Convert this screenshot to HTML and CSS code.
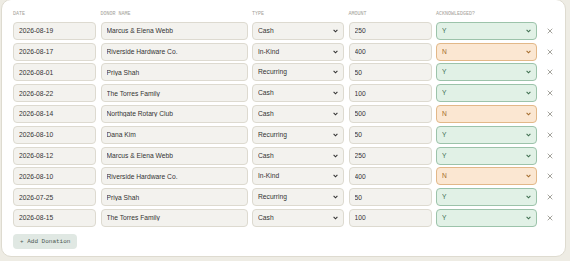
FILE: index.html
```html
<html>
<head>
<title>Donations</title>
<meta charset="utf-8" name="viewport" content="width=device-width, initial-scale=1.0" />
<link rel="stylesheet" href="styles.css">
</head>
<body>

<div class="card">
<div class="grid" id="grid">
<div class="head">Date</div>
<div class="head">Donor Name</div>
<div class="head">Type</div>
<div class="head">Amount</div>
<div class="head">Acknowledged?</div>
<div></div>
</div>
<button class="add">+ Add Donation</button>
</div>

<script>
let rows = [
    ["2026-08-19", "Marcus & Elena Webb", "Cash", "250", "Y"],
    ["2026-08-17", "Riverside Hardware Co.", "In-Kind", "400", "N"],
    ["2026-08-01", "Priya Shah", "Recurring", "50", "Y"],
    ["2026-08-22", "The Torres Family", "Cash", "100", "Y"],
    ["2026-08-14", "Northgate Rotary Club", "Cash", "500", "N"],
    ["2026-08-10", "Dana Kim", "Recurring", "50", "Y"],
    ["2026-08-12", "Marcus & Elena Webb", "Cash", "250", "Y"],
    ["2026-08-10", "Riverside Hardware Co.", "In-Kind", "400", "N"],
    ["2026-07-25", "Priya Shah", "Recurring", "50", "Y"],
    ["2026-08-15", "The Torres Family", "Cash", "100", "Y"]
];

let types = ["Cash", "In-Kind", "Recurring"];

function field(value) {
    let el = document.createElement("input");
    el.className = "field";
    el.value = value;
    return el;
}

function choice(options, value, cls) {
    let el = document.createElement("select");
    el.className = "field pick " + cls;
    for (let o of options) {
        let opt = document.createElement("option");
        opt.textContent = o;
        if (o == value) opt.selected = true;
        el.append(opt);
    }
    return el;
}

let grid = document.getElementById("grid");
for (let r of rows) {
    grid.append(field(r[0]));
    grid.append(field(r[1]));
    grid.append(choice(types, r[2], ""));
    grid.append(field(r[3]));
    grid.append(choice(["Y", "N"], r[4], r[4] == "Y" ? "yes" : "no"));
    let del = document.createElement("span");
    del.className = "del";
    del.title = "Remove";
    del.innerHTML = '<svg width="6" height="6" viewBox="0 0 6 6"><path d="M0.7 0.7 L5.3 5.3 M5.3 0.7 L0.7 5.3" stroke="#9a9891" stroke-width="0.9" fill="none"/></svg>';
    grid.append(del);
}
</script>
</body>
</html>
```

FILE: styles.css
```css
body {
    margin: 0;
    background-color: #eeece4;
    font-family: "Liberation Sans", Arial, sans-serif;
    color: #333;
}

.card {
    background-color: #fff;
    border: 1px solid #dedbd0;
    border-radius: 10px;
    margin: -1px 4px 0 1px;
    height: 258px;
    box-sizing: border-box;
    padding: 10px 12px 0 11px;
}

.grid {
    display: grid;
    grid-template-columns: 83px 147px 92px 83px 101px 20px;
    column-gap: 4.5px;
    row-gap: 2.8px;
    align-items: center;
}

.head {
    font-family: "Liberation Mono", monospace;
    font-size: 5px;
    color: #a3a098;
    text-transform: uppercase;
    height: 9px;
    line-height: 9px;
}

.field {
    height: 18px;
    line-height: 16px;
    box-sizing: border-box;
    background-color: #f3f2ee;
    border: 1px solid #dddad0;
    border-radius: 4px;
    font-family: "Liberation Sans", Arial, sans-serif;
    font-size: 6.7px;
    color: #333;
    padding: 0 5px;
    width: 100%;
    margin: 0;
}

.pick {
    appearance: none;
    -webkit-appearance: none;
    padding: 0 12px 0 5px;
    background-image: url("data:image/svg+xml,%3Csvg xmlns='http://www.w3.org/2000/svg' width='5' height='4' viewBox='0 0 5 4'%3E%3Cpath d='M0.6 0.9 L2.5 2.8 L4.4 0.9' fill='none' stroke='%23333' stroke-width='1.1'/%3E%3C/svg%3E");
    background-repeat: no-repeat;
    background-position: right 5px center;
    background-size: 5px 4px;
}

.yes {
    background-color: #e1f1e6;
    border-color: #9cc3aa;
    color: #3f6e4f;
    background-image: url("data:image/svg+xml,%3Csvg xmlns='http://www.w3.org/2000/svg' width='5' height='4' viewBox='0 0 5 4'%3E%3Cpath d='M0.6 0.9 L2.5 2.8 L4.4 0.9' fill='none' stroke='%233f6e4f' stroke-width='1.1'/%3E%3C/svg%3E");
}

.no {
    background-color: #fbe7d2;
    border-color: #e2b888;
    color: #a56d2d;
    background-image: url("data:image/svg+xml,%3Csvg xmlns='http://www.w3.org/2000/svg' width='5' height='4' viewBox='0 0 5 4'%3E%3Cpath d='M0.6 0.9 L2.5 2.8 L4.4 0.9' fill='none' stroke='%23a56d2d' stroke-width='1.1'/%3E%3C/svg%3E");
}

.del {
    display: flex;
    align-items: center;
    padding-left: 5px;
}

.add {
    margin-top: 7px;
    background-color: #e0e8e3;
    border: none;
    border-radius: 4px;
    font-family: "Liberation Mono", monospace;
    font-size: 6px;
    color: #4c5a53;
    height: 15px;
    padding: 0 7px;
}
```
